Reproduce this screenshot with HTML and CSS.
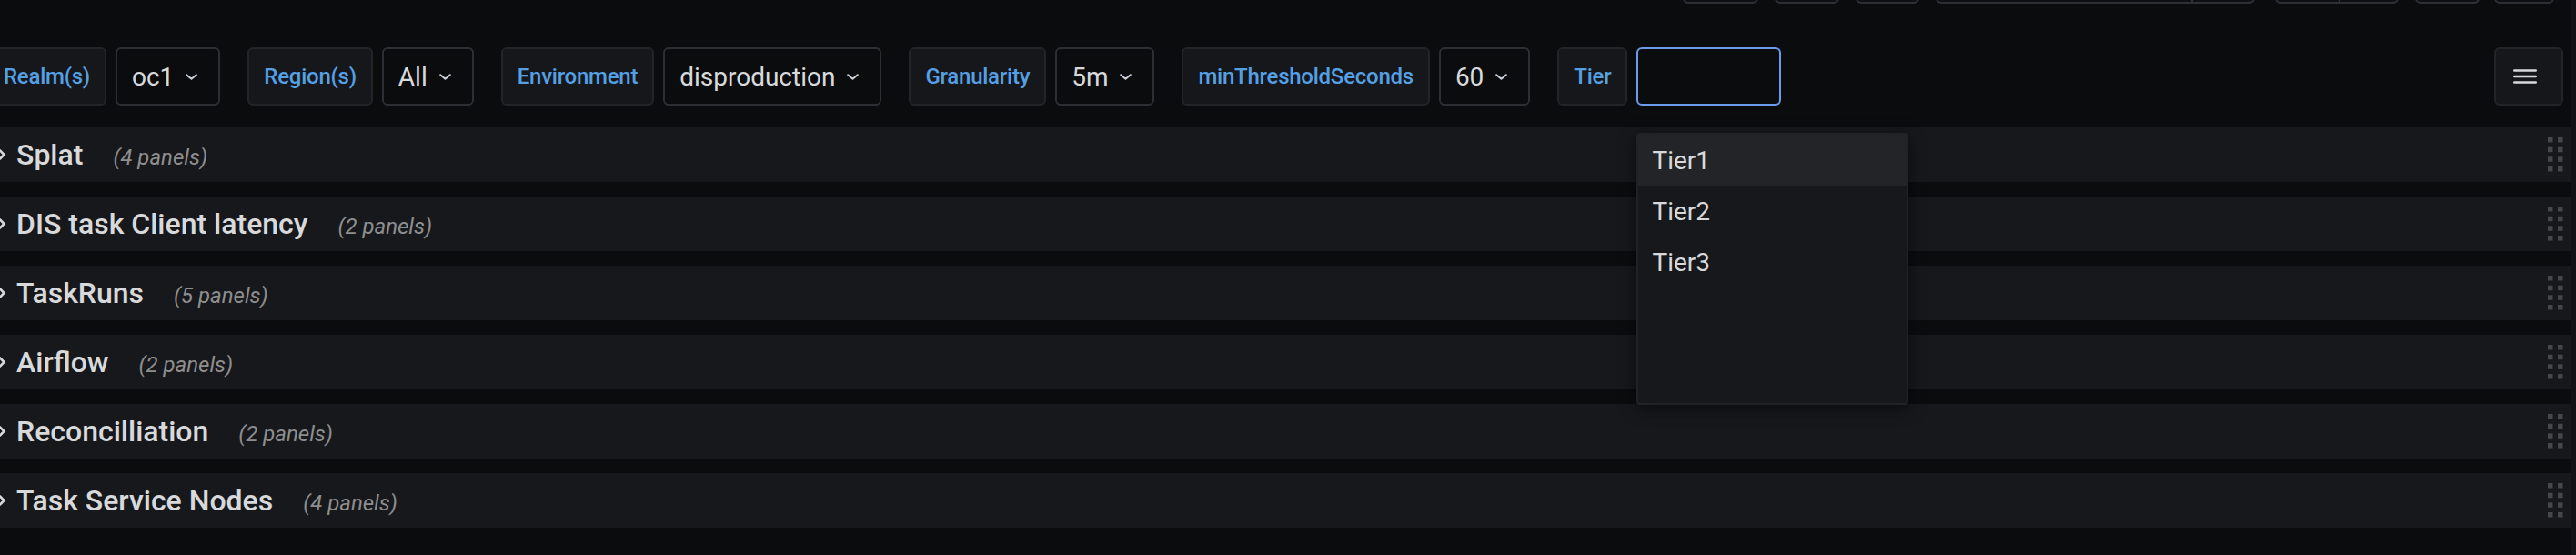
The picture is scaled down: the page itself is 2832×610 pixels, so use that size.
FILE: index.html
```html
<!DOCTYPE html>
<html lang="en">
<head>
<meta charset="utf-8">
<title>Dashboard</title>
<link rel="stylesheet" href="styles.css">
</head>
<body>
<div class="app">
  <div class="main">
    <div class="topbar">
      <div class="tbtn tb-star"></div>
      <div class="tbtn tb-share"></div>
      <div class="tbtn tb-save"></div>
      <div class="tbtn tb-time"><span class="seg seg-range"></span><span class="seg seg-zoom"></span></div>
      <div class="tbtn tb-refresh"><span class="seg seg-ref"></span><span class="seg seg-int"></span></div>
      <div class="tbtn tb-tv"></div>
      <div class="tbtn tb-cog"></div>
    </div>

    <div class="submenu">
      <div class="var">
        <span class="var-label">Realm(s)</span>
        <button class="var-value">oc1<svg class="caret" viewBox="0 0 13 7" width="13" height="7"><path d="M1.2 1.2 L6.5 5.8 L11.8 1.2"/></svg></button>
      </div>
      <div class="var">
        <span class="var-label">Region(s)</span>
        <button class="var-value">All<svg class="caret" viewBox="0 0 13 7" width="13" height="7"><path d="M1.2 1.2 L6.5 5.8 L11.8 1.2"/></svg></button>
      </div>
      <div class="var">
        <span class="var-label">Environment</span>
        <button class="var-value">disproduction<svg class="caret" viewBox="0 0 13 7" width="13" height="7"><path d="M1.2 1.2 L6.5 5.8 L11.8 1.2"/></svg></button>
      </div>
      <div class="var">
        <span class="var-label">Granularity</span>
        <button class="var-value">5m<svg class="caret" viewBox="0 0 13 7" width="13" height="7"><path d="M1.2 1.2 L6.5 5.8 L11.8 1.2"/></svg></button>
      </div>
      <div class="var">
        <span class="var-label">minThresholdSeconds</span>
        <button class="var-value">60<svg class="caret" viewBox="0 0 13 7" width="13" height="7"><path d="M1.2 1.2 L6.5 5.8 L11.8 1.2"/></svg></button>
      </div>
      <div class="var">
        <span class="var-label">Tier</span>
        <div class="tier-wrap">
          <input class="tier-input" type="text" aria-label="Tier">
          <ul class="dropdown">
            <li class="option active">Tier1</li>
            <li class="option">Tier2</li>
            <li class="option">Tier3</li>
          </ul>
        </div>
      </div>
      <button class="menu-btn" aria-label="Menu">
        <svg viewBox="0 0 26 16" width="26" height="16"><path d="M1.2 1.5 H24.8 M1.2 8 H24.8 M1.2 14.5 H24.8"/></svg>
      </button>
    </div>

    <div class="rows">
      <div class="row">
        <svg class="row-chev" viewBox="0 0 12 14" width="12" height="14"><path d="M3.5 2 L8.5 7 L3.5 12"/></svg>
        <span class="row-head"><span class="row-title">Splat</span><span class="row-count">(4 panels)</span></span>
        <svg class="handle" viewBox="0 0 17 38" width="17" height="38"><g><rect x="0" y="0" width="5.5" height="5.5"/><rect x="11" y="0" width="5.5" height="5.5"/><rect x="0" y="10.7" width="5.5" height="5.5"/><rect x="11" y="10.7" width="5.5" height="5.5"/><rect x="0" y="21.3" width="5.5" height="5.5"/><rect x="11" y="21.3" width="5.5" height="5.5"/><rect x="0" y="32" width="5.5" height="5.5"/><rect x="11" y="32" width="5.5" height="5.5"/></g></svg>
      </div>
      <div class="row">
        <svg class="row-chev" viewBox="0 0 12 14" width="12" height="14"><path d="M3.5 2 L8.5 7 L3.5 12"/></svg>
        <span class="row-head"><span class="row-title">DIS task Client latency</span><span class="row-count">(2 panels)</span></span>
        <svg class="handle" viewBox="0 0 17 38" width="17" height="38"><g><rect x="0" y="0" width="5.5" height="5.5"/><rect x="11" y="0" width="5.5" height="5.5"/><rect x="0" y="10.7" width="5.5" height="5.5"/><rect x="11" y="10.7" width="5.5" height="5.5"/><rect x="0" y="21.3" width="5.5" height="5.5"/><rect x="11" y="21.3" width="5.5" height="5.5"/><rect x="0" y="32" width="5.5" height="5.5"/><rect x="11" y="32" width="5.5" height="5.5"/></g></svg>
      </div>
      <div class="row">
        <svg class="row-chev" viewBox="0 0 12 14" width="12" height="14"><path d="M3.5 2 L8.5 7 L3.5 12"/></svg>
        <span class="row-head"><span class="row-title">TaskRuns</span><span class="row-count">(5 panels)</span></span>
        <svg class="handle" viewBox="0 0 17 38" width="17" height="38"><g><rect x="0" y="0" width="5.5" height="5.5"/><rect x="11" y="0" width="5.5" height="5.5"/><rect x="0" y="10.7" width="5.5" height="5.5"/><rect x="11" y="10.7" width="5.5" height="5.5"/><rect x="0" y="21.3" width="5.5" height="5.5"/><rect x="11" y="21.3" width="5.5" height="5.5"/><rect x="0" y="32" width="5.5" height="5.5"/><rect x="11" y="32" width="5.5" height="5.5"/></g></svg>
      </div>
      <div class="row">
        <svg class="row-chev" viewBox="0 0 12 14" width="12" height="14"><path d="M3.5 2 L8.5 7 L3.5 12"/></svg>
        <span class="row-head"><span class="row-title">Airflow</span><span class="row-count">(2 panels)</span></span>
        <svg class="handle" viewBox="0 0 17 38" width="17" height="38"><g><rect x="0" y="0" width="5.5" height="5.5"/><rect x="11" y="0" width="5.5" height="5.5"/><rect x="0" y="10.7" width="5.5" height="5.5"/><rect x="11" y="10.7" width="5.5" height="5.5"/><rect x="0" y="21.3" width="5.5" height="5.5"/><rect x="11" y="21.3" width="5.5" height="5.5"/><rect x="0" y="32" width="5.5" height="5.5"/><rect x="11" y="32" width="5.5" height="5.5"/></g></svg>
      </div>
      <div class="row">
        <svg class="row-chev" viewBox="0 0 12 14" width="12" height="14"><path d="M3.5 2 L8.5 7 L3.5 12"/></svg>
        <span class="row-head"><span class="row-title">Reconcilliation</span><span class="row-count">(2 panels)</span></span>
        <svg class="handle" viewBox="0 0 17 38" width="17" height="38"><g><rect x="0" y="0" width="5.5" height="5.5"/><rect x="11" y="0" width="5.5" height="5.5"/><rect x="0" y="10.7" width="5.5" height="5.5"/><rect x="11" y="10.7" width="5.5" height="5.5"/><rect x="0" y="21.3" width="5.5" height="5.5"/><rect x="11" y="21.3" width="5.5" height="5.5"/><rect x="0" y="32" width="5.5" height="5.5"/><rect x="11" y="32" width="5.5" height="5.5"/></g></svg>
      </div>
      <div class="row">
        <svg class="row-chev" viewBox="0 0 12 14" width="12" height="14"><path d="M3.5 2 L8.5 7 L3.5 12"/></svg>
        <span class="row-head"><span class="row-title">Task Service Nodes</span><span class="row-count">(4 panels)</span></span>
        <svg class="handle" viewBox="0 0 17 38" width="17" height="38"><g><rect x="0" y="0" width="5.5" height="5.5"/><rect x="11" y="0" width="5.5" height="5.5"/><rect x="0" y="10.7" width="5.5" height="5.5"/><rect x="11" y="10.7" width="5.5" height="5.5"/><rect x="0" y="21.3" width="5.5" height="5.5"/><rect x="11" y="21.3" width="5.5" height="5.5"/><rect x="0" y="32" width="5.5" height="5.5"/><rect x="11" y="32" width="5.5" height="5.5"/></g></svg>
      </div>
    </div>
  </div>
  <div class="track"></div>
</div>
</body>
</html>
```
FILE: styles.css
```css
html, body {
  margin: 0;
  height: 610px;
  overflow: hidden;
  background: #0b0c0e;
  font-family: Roboto, "Liberation Sans", Arial, sans-serif;
}

.app {
  display: flex;
  height: 610px;
}

.main {
  flex: 1;
  min-width: 0;
  margin-left: -14px;
}

.track {
  width: 6px;
  background: #111215;
}

/* top navbar (only its bottom edge is in view) */
.topbar {
  display: flex;
  justify-content: flex-end;
  gap: 18px;
  height: 64px;
  margin-top: -60px;
  padding-right: 18px;
}

.tbtn {
  box-sizing: border-box;
  height: 64px;
  display: flex;
  border: 2px solid #2c3034;
  border-radius: 6px;
  background: #0f1013;
}

.tb-star { width: 83px; }
.tb-share { width: 71px; }
.tb-save { width: 70px; }
.tb-time { width: 351px; }
.tb-refresh { width: 136px; margin-left: 4px; }
.tb-tv { width: 71px; }
.tb-cog { width: 66px; margin-left: -2px; }

.seg { height: 100%; }
.seg + .seg { border-left: 2px solid #2c3034; }
.seg-range { width: 279px; }
.seg-zoom { flex: 1; }
.seg-ref { width: 68px; }
.seg-int { flex: 1; }

/* variables bar */
.submenu {
  position: relative;
  z-index: 2;
  display: flex;
  align-items: center;
  height: 64px;
  margin-top: 48px;
  padding-right: 8px;
}

.var {
  display: flex;
  gap: 10px;
  margin-right: 30px;
}

.var-label {
  box-sizing: border-box;
  height: 64px;
  display: flex;
  align-items: center;
  padding: 0 16px;
  border: 2px solid #222428;
  border-radius: 6px;
  background: #16171b;
  color: #55a0e4;
  font-size: 24px;
  font-weight: 500;
  letter-spacing: -0.25px;
  white-space: nowrap;
}

.var-value {
  box-sizing: border-box;
  height: 64px;
  display: flex;
  align-items: center;
  gap: 13px;
  padding: 0 23px 0 16px;
  border: 2px solid #2b2f33;
  border-radius: 6px;
  background: #0b0c0e;
  color: #d8d9da;
  font-family: Roboto, "Liberation Sans", Arial, sans-serif;
  font-size: 28px;
  font-weight: 400;
  cursor: pointer;
}

.caret {
  fill: none;
  stroke: #c7d0d9;
  stroke-width: 2;
  stroke-linecap: round;
  stroke-linejoin: round;
}

.tier-wrap {
  position: relative;
}

.tier-input {
  display: block;
  box-sizing: border-box;
  width: 159px;
  height: 64px;
  margin: 0;
  padding: 0 16px;
  border: 2px solid #6b9cec;
  border-radius: 6px;
  background: #0b0c0e;
  color: #d8d9da;
  font-size: 28px;
  outline: none;
}

.dropdown {
  position: absolute;
  top: 94px;
  left: 0;
  box-sizing: border-box;
  width: 299px;
  height: 299px;
  margin: 0;
  padding: 0;
  list-style: none;
  border: 2px solid #202226;
  border-radius: 4px;
  background: #17181c;
  box-shadow: 0 4px 18px rgba(0, 0, 0, 0.55);
}

.option {
  height: 56px;
  display: flex;
  align-items: center;
  padding-left: 15px;
  color: #d8d9da;
  font-size: 28px;
}

.option.active {
  background: #232428;
}

.menu-btn {
  box-sizing: border-box;
  width: 76px;
  height: 64px;
  margin-left: auto;
  display: flex;
  align-items: center;
  padding: 0 0 0 19px;
  border: 2px solid #222428;
  border-radius: 6px;
  background: #16171b;
  cursor: pointer;
}

.menu-btn svg {
  fill: none;
  stroke: #d8d9da;
  stroke-width: 2.4;
  stroke-linecap: round;
}

/* dashboard rows */
.rows {
  display: flex;
  flex-direction: column;
  gap: 16px;
  margin-top: 24px;
}

.row {
  height: 60px;
  display: flex;
  align-items: center;
  padding: 0 8px 0 10px;
  background: #17181c;
}

.row-chev {
  flex: none;
  margin-right: 10px;
  fill: none;
  stroke: #d8d9da;
  stroke-width: 2.6;
  stroke-linejoin: miter;
}

.row-head {
  display: flex;
  align-items: baseline;
}

.row-title {
  color: #d8d9da;
  font-size: 32px;
  font-weight: 500;
}

.row-count {
  margin-left: 33px;
  color: #8e8e8e;
  font-size: 24px;
  font-style: italic;
}

.handle {
  margin-left: auto;
  fill: #46474b;
}
```
